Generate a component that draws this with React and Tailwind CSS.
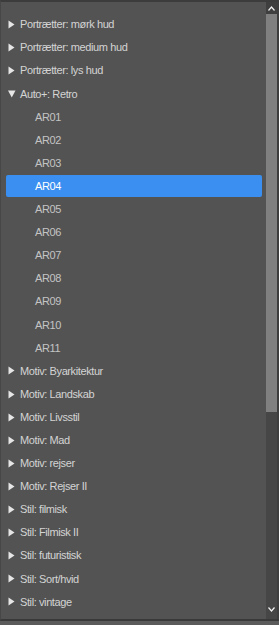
import React from 'react';

const groupsBefore = ['Portrætter: mørk hud', 'Portrætter: medium hud', 'Portrætter: lys hud'];
const retro = ['AR01', 'AR02', 'AR03', 'AR04', 'AR05', 'AR06', 'AR07', 'AR08', 'AR09', 'AR10', 'AR11'];
const groupsAfter = [
  'Motiv: Byarkitektur',
  'Motiv: Landskab',
  'Motiv: Livsstil',
  'Motiv: Mad',
  'Motiv: rejser',
  'Motiv: Rejser II',
  'Stil: filmisk',
  'Stil: Filmisk II',
  'Stil: futuristisk',
  'Stil: Sort/hvid',
  'Stil: vintage',
];

const Caret = ({ open }) => (
  <svg width="8" height="9" viewBox="0 0 8 9" className="shrink-0">
    {open ? <path d="M0 1.5 H7.5 L3.75 8.5 Z" fill="#e6e6e6" /> : <path d="M0.5 0.5 L6.5 4.5 L0.5 8.5 Z" fill="#e6e6e6" />}
  </svg>
);

const GroupRow = ({ label, open = false }) => (
  <div className="h-[23.1px] flex items-center pl-[7px] gap-[4px] text-[#d4d4d4]">
    <Caret open={open} />
    <span>{label}</span>
  </div>
);

const PresetRow = ({ label, selected }) => (
  <div className="h-[23.1px] flex items-center">
    <div
      className={`flex-1 h-[22px] ml-[5px] mr-[4px] flex items-center pl-[29px] rounded-[2px] ${
        selected ? 'bg-[#3a8ff0] text-white' : 'text-[#c4c4c4]'
      }`}
    >
      {label}
    </div>
  </div>
);

export default function App() {
  return (
    <div className="w-[279px] h-[625px] bg-[#5b5b5b] flex flex-col overflow-hidden">
      <div
        className="h-[621px] flex bg-[#535353] border-t-2 border-b-2 border-l border-t-[#3c3c3c] border-b-[#393939] border-l-[#474747] text-[11px] tracking-[-0.4px]"
        style={{ fontFamily: '"Liberation Sans", Arial, sans-serif' }}
      >
        <div className="flex-1 pt-[11px] overflow-hidden">
          {groupsBefore.map((g) => (
            <GroupRow key={g} label={g} />
          ))}
          <GroupRow label="Auto+: Retro" open />
          {retro.map((r) => (
            <PresetRow key={r} label={r} selected={r === 'AR04'} />
          ))}
          {groupsAfter.map((g) => (
            <GroupRow key={g} label={g} />
          ))}
        </div>
        <div className="w-[13px] flex flex-col bg-[#464646] border-r-2 border-[#3e3e3e]">
          <div className="h-[12px] flex items-center justify-center bg-[#3f3f3f]">
            <svg width="7" height="5" viewBox="0 0 7 5">
              <path d="M0.5 4.5 L3.5 1 L6.5 4.5" stroke="#f0f0f0" strokeWidth="1.2" fill="none" />
            </svg>
          </div>
          <div className="h-[398px] bg-[#808080]" />
          <div className="flex-1" />
          <div className="h-[12px] mb-[4px] flex items-center justify-center">
            <svg width="7" height="5" viewBox="0 0 7 5">
              <path d="M0.5 0.5 L3.5 4 L6.5 0.5" stroke="#f0f0f0" strokeWidth="1.2" fill="none" />
            </svg>
          </div>
        </div>
      </div>
    </div>
  );
}
